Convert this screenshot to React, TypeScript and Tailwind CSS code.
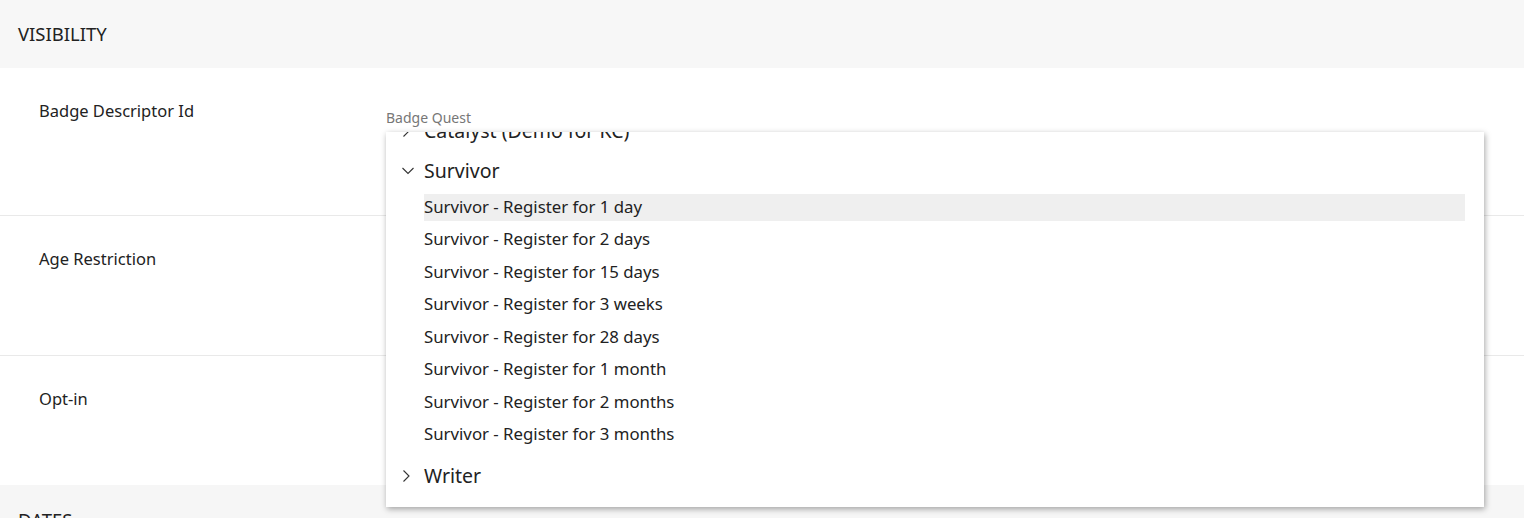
import React from "react";

const items = [
  "Survivor - Register for 1 day",
  "Survivor - Register for 2 days",
  "Survivor - Register for 15 days",
  "Survivor - Register for 3 weeks",
  "Survivor - Register for 28 days",
  "Survivor - Register for 1 month",
  "Survivor - Register for 2 months",
  "Survivor - Register for 3 months",
];

function ChevronDown() {
  return (
    <svg width="12" height="8" viewBox="0 0 12 8" fill="none" className="text-[#333]">
      <path d="M0.5 1 L6 6.5 L11.5 1" stroke="currentColor" strokeWidth="1.1" />
    </svg>
  );
}

function ChevronRight() {
  return (
    <svg width="8" height="12" viewBox="0 0 8 12" fill="none" className="mr-[4px] text-[#333]">
      <path d="M1.5 0.5 L7 6 L1.5 11.5" stroke="currentColor" strokeWidth="1.1" />
    </svg>
  );
}

function GroupHeader({ label, open }: { label: string; open?: boolean }) {
  return (
    <div className="flex h-[40px] items-center">
      <div className="flex w-[38px] justify-end pr-[10px]">
        {open ? <ChevronDown /> : <ChevronRight />}
      </div>
      <span className="text-[19.5px] text-[#222]">{label}</span>
    </div>
  );
}

function Row({ label, h, last }: { label: string; h: string; last?: boolean }) {
  return (
    <div className={`${h} ${last ? "" : "border-b border-[#e9e9e9]"} pl-[39px] pt-[31px]`}>
      <span className="text-[16.5px] text-[#222]">{label}</span>
    </div>
  );
}

export default function App() {
  return (
    <div
      className="relative h-[518px] w-[1524px] overflow-hidden bg-white"
      style={{ fontFamily: '"Noto Sans", "Open Sans", sans-serif' }}
    >
      <div className="flex h-[68px] items-center bg-[#f7f7f7] px-[18px]">
        <span className="text-[18.5px] text-[#222]">VISIBILITY</span>
      </div>

      <Row label="Badge Descriptor Id" h="h-[148px]" />
      <Row label="Age Restriction" h="h-[140px]" />
      <Row label="Opt-in" h="h-[129px]" last />

      <div className="h-[40px] bg-[#f6f6f6] px-[18px] pt-[21px]">
        <span className="text-[18.5px] text-[#222]">DATES</span>
      </div>

      <div className="absolute left-[386px] top-[107px] text-[14px] text-[#777]">Badge Quest</div>

      <div className="absolute left-[386px] top-[132px] h-[375px] w-[1098px] overflow-hidden bg-white shadow-[1px_2px_6px_rgba(0,0,0,0.35)]">
        <div className="-mt-[21px]">
          <GroupHeader label="Catalyst (Demo for KC)" />
          <GroupHeader label="Survivor" open />
          <div className="pb-[5px] pl-[38px] pr-[19px]">
            {items.map((it, i) => (
              <div key={it} className="flex h-[32.5px] items-center">
                <div
                  className={`flex h-[27px] w-full items-center pb-[2px] text-[16.8px] text-[#222] ${
                    i === 0 ? "bg-[#efefef]" : ""
                  }`}
                >
                  {it}
                </div>
              </div>
            ))}
          </div>
          <GroupHeader label="Writer" />
        </div>
      </div>
    </div>
  );
}
